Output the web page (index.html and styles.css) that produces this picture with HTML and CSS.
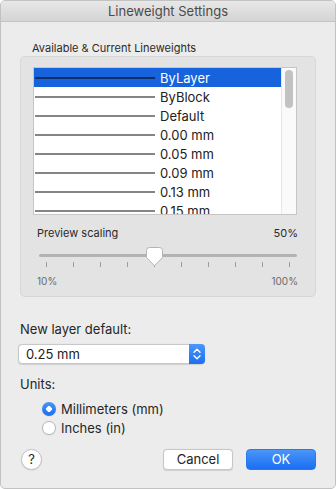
FILE: index.html
```html
<!DOCTYPE html>
<html>
<head>
<meta charset="utf-8">
<link rel="stylesheet" href="styles.css">
</head>
<body>
<div class="window">
  <div class="titlebar">Lineweight Settings</div>
  <div class="content">
    <div class="group-label">Available &amp; Current Lineweights</div>
    <div class="group">
      <div class="list">
        <div class="rows">
          <div class="row selected"><span class="line"></span><span class="name">ByLayer</span></div>
          <div class="row"><span class="line"></span><span class="name">ByBlock</span></div>
          <div class="row"><span class="line"></span><span class="name">Default</span></div>
          <div class="row"><span class="line"></span><span class="name">0.00 mm</span></div>
          <div class="row"><span class="line"></span><span class="name">0.05 mm</span></div>
          <div class="row"><span class="line"></span><span class="name">0.09 mm</span></div>
          <div class="row"><span class="line"></span><span class="name">0.13 mm</span></div>
          <div class="row"><span class="line"></span><span class="name">0.15 mm</span></div>
          <div class="row"><span class="line"></span><span class="name">0.18 mm</span></div>
        </div>
        <div class="scrollbar"><div class="thumb"></div></div>
      </div>
      <div class="scaling">
        <div class="scale-head"><span>Preview scaling</span><span>50%</span></div>
        <div class="slider">
          <div class="track"></div>
          <div class="ticks">
            <i></i><i></i><i></i><i></i><i></i><i></i><i></i><i></i><i></i><i></i>
          </div>
          <svg class="knob" width="17" height="20" viewBox="0 0 17 20">
            <path d="M3.5 0.5 H13.5 A3 3 0 0 1 16.5 3.5 V10.5 L8.5 18.8 L0.5 10.5 V3.5 A3 3 0 0 1 3.5 0.5 Z" fill="#ffffff" stroke="#b3b3b3" stroke-width="1"/>
          </svg>
        </div>
        <div class="scale-foot"><span>10%</span><span>100%</span></div>
      </div>
    </div>

    <div class="label first">New layer default:</div>
    <div class="popup">
      <span class="popup-text">0.25 mm</span>
      <span class="stepper">
        <svg width="16" height="20" viewBox="0 0 16 20">
          <path d="M5 8.2 L8 5.2 L11 8.2" fill="none" stroke="#fff" stroke-width="1.4" stroke-linecap="round" stroke-linejoin="round"/>
          <path d="M5 11.8 L8 14.8 L11 11.8" fill="none" stroke="#fff" stroke-width="1.4" stroke-linecap="round" stroke-linejoin="round"/>
        </svg>
      </span>
    </div>

    <div class="label units">Units:</div>
    <div class="radios">
      <div class="radio-row"><span class="radio on"></span><span>Millimeters (mm)</span></div>
      <div class="radio-row"><span class="radio"></span><span>Inches (in)</span></div>
    </div>

    <div class="buttons">
      <div class="help">?</div>
      <div class="spacer"></div>
      <div class="btn cancel">Cancel</div>
      <div class="btn ok">OK</div>
    </div>
  </div>
</div>
</body>
</html>
```

FILE: styles.css
```css
* { box-sizing: border-box; }
html, body { margin: 0; padding: 0; }
body {
  width: 336px;
  height: 489px;
  overflow: hidden;
  font-family: Inter, "Noto Sans", sans-serif;
  color: #262626;
}
.window {
  width: 336px;
  height: 489px;
  background: #ececec;
  border: 1px solid #c2c2c2;
  border-radius: 5px;
  overflow: hidden;
}
.titlebar {
  height: 21px;
  line-height: 20px;
  text-align: center;
  font-size: 13px;
  color: #4b4b4b;
  background: linear-gradient(#e8e8e8, #d4d4d4);
  border-bottom: 1px solid #c4c4c4;
}
.content {
  padding: 0 19px;
}
.group-label {
  margin: 19px 0 1px 12px;
  font-size: 11px;
  line-height: 14px;
  color: #2a2a2a;
}
.group {
  background: #e3e3e3;
  border: 1px solid #d7d7d7;
  border-radius: 5px;
  padding: 10px 18px 8px 12px;
}
.list {
  height: 148px;
  border: 1px solid #c6c6c6;
  background: #fff;
  display: flex;
  overflow: hidden;
}
.rows {
  flex: 1;
  overflow: hidden;
}
.row {
  height: 19px;
  display: flex;
  align-items: center;
  font-size: 13px;
  color: #222;
}
.row.selected {
  background: #1663dd;
  color: #fff;
}
.line {
  width: 120px;
  height: 2px;
  margin-left: 1px;
  margin-right: 5px;
  background: #858585;
}
.row.selected .line { background: #0f2f66; }
.scrollbar {
  width: 15px;
  border-left: 1px solid #e6e6e6;
  background: #fafafa;
  padding: 2px 0 0 3px;
}
.thumb {
  width: 8px;
  height: 38px;
  border-radius: 4px;
  background: #c2c2c2;
}
.scaling {
  margin: 11px -1px 0 4px;
}
.scale-head, .scale-foot {
  display: flex;
  justify-content: space-between;
  font-size: 11px;
  line-height: 14px;
  color: #2a2a2a;
}
.slider {
  position: relative;
  margin-top: 7px;
  padding-top: 7px;
  height: 20px;
}
.track {
  margin: 0 1px 0 2px;
  height: 3px;
  border-radius: 2px;
  background: #b3b3b3;
}
.ticks {
  display: flex;
  justify-content: space-between;
  padding: 0 8px 0 9px;
  margin-top: 5px;
}
.ticks i {
  width: 1px;
  height: 5px;
  background: #9c9c9c;
}
.knob {
  position: absolute;
  left: 109px;
  top: 0;
}
.scale-foot {
  margin-top: 7px;
  font-size: 10px;
  color: #6a6a6a;
}
.label {
  font-size: 13px;
  line-height: 16px;
  color: #262626;
}
.label.first { margin-top: 24px; }
.popup {
  margin: 7px 0 0 -2px;
  width: 187px;
  height: 20px;
  display: flex;
  background: #fff;
  border: 1px solid #c8c8c8;
  border-radius: 4px;
  box-shadow: 0 0.5px 1px rgba(0,0,0,0.12);
}
.popup-text {
  flex: 1;
  padding-left: 7px;
  font-size: 13px;
  line-height: 18px;
  color: #222;
}
.stepper {
  width: 16px;
  margin: -1px -1px -1px 0;
  height: 20px;
  background: linear-gradient(#4d97f8, #1b6ff2);
  border-radius: 0 4px 4px 0;
  display: flex;
}
.label.units { margin-top: 12px; }
.radios {
  margin: 7px 0 0 22px;
}
.radio-row {
  height: 19px;
  display: flex;
  align-items: center;
  gap: 5px;
  font-size: 13px;
  color: #262626;
}
.radio {
  width: 14px;
  height: 14px;
  border-radius: 50%;
  background: #fff;
  border: 1px solid #b9b9b9;
  box-shadow: 0 0.5px 1px rgba(0,0,0,0.1);
}
.radio.on {
  border: none;
  background: radial-gradient(circle, #fff 0 2.6px, transparent 3px), linear-gradient(#4a94f7, #1b6ef2);
}
.buttons {
  display: flex;
  align-items: center;
  margin-top: 12px;
  gap: 13px;
}
.help {
  width: 21px;
  height: 21px;
  margin-left: 1px;
  border-radius: 50%;
  background: #fff;
  border: 1px solid #c2c2c2;
  box-shadow: 0 0.5px 1px rgba(0,0,0,0.12);
  font-size: 13px;
  line-height: 19px;
  text-align: center;
  color: #262626;
}
.spacer { flex: 1; }
.btn {
  width: 70px;
  height: 21px;
  border-radius: 4px;
  font-size: 13px;
  line-height: 19px;
  text-align: center;
}
.cancel {
  background: #fff;
  border: 1px solid #c6c6c6;
  box-shadow: 0 0.5px 1px rgba(0,0,0,0.12);
  color: #222;
}
.ok {
  background: linear-gradient(#4b96f8, #1a6ef2);
  border: 1px solid #2a78ee;
  color: #fff;
}
```
